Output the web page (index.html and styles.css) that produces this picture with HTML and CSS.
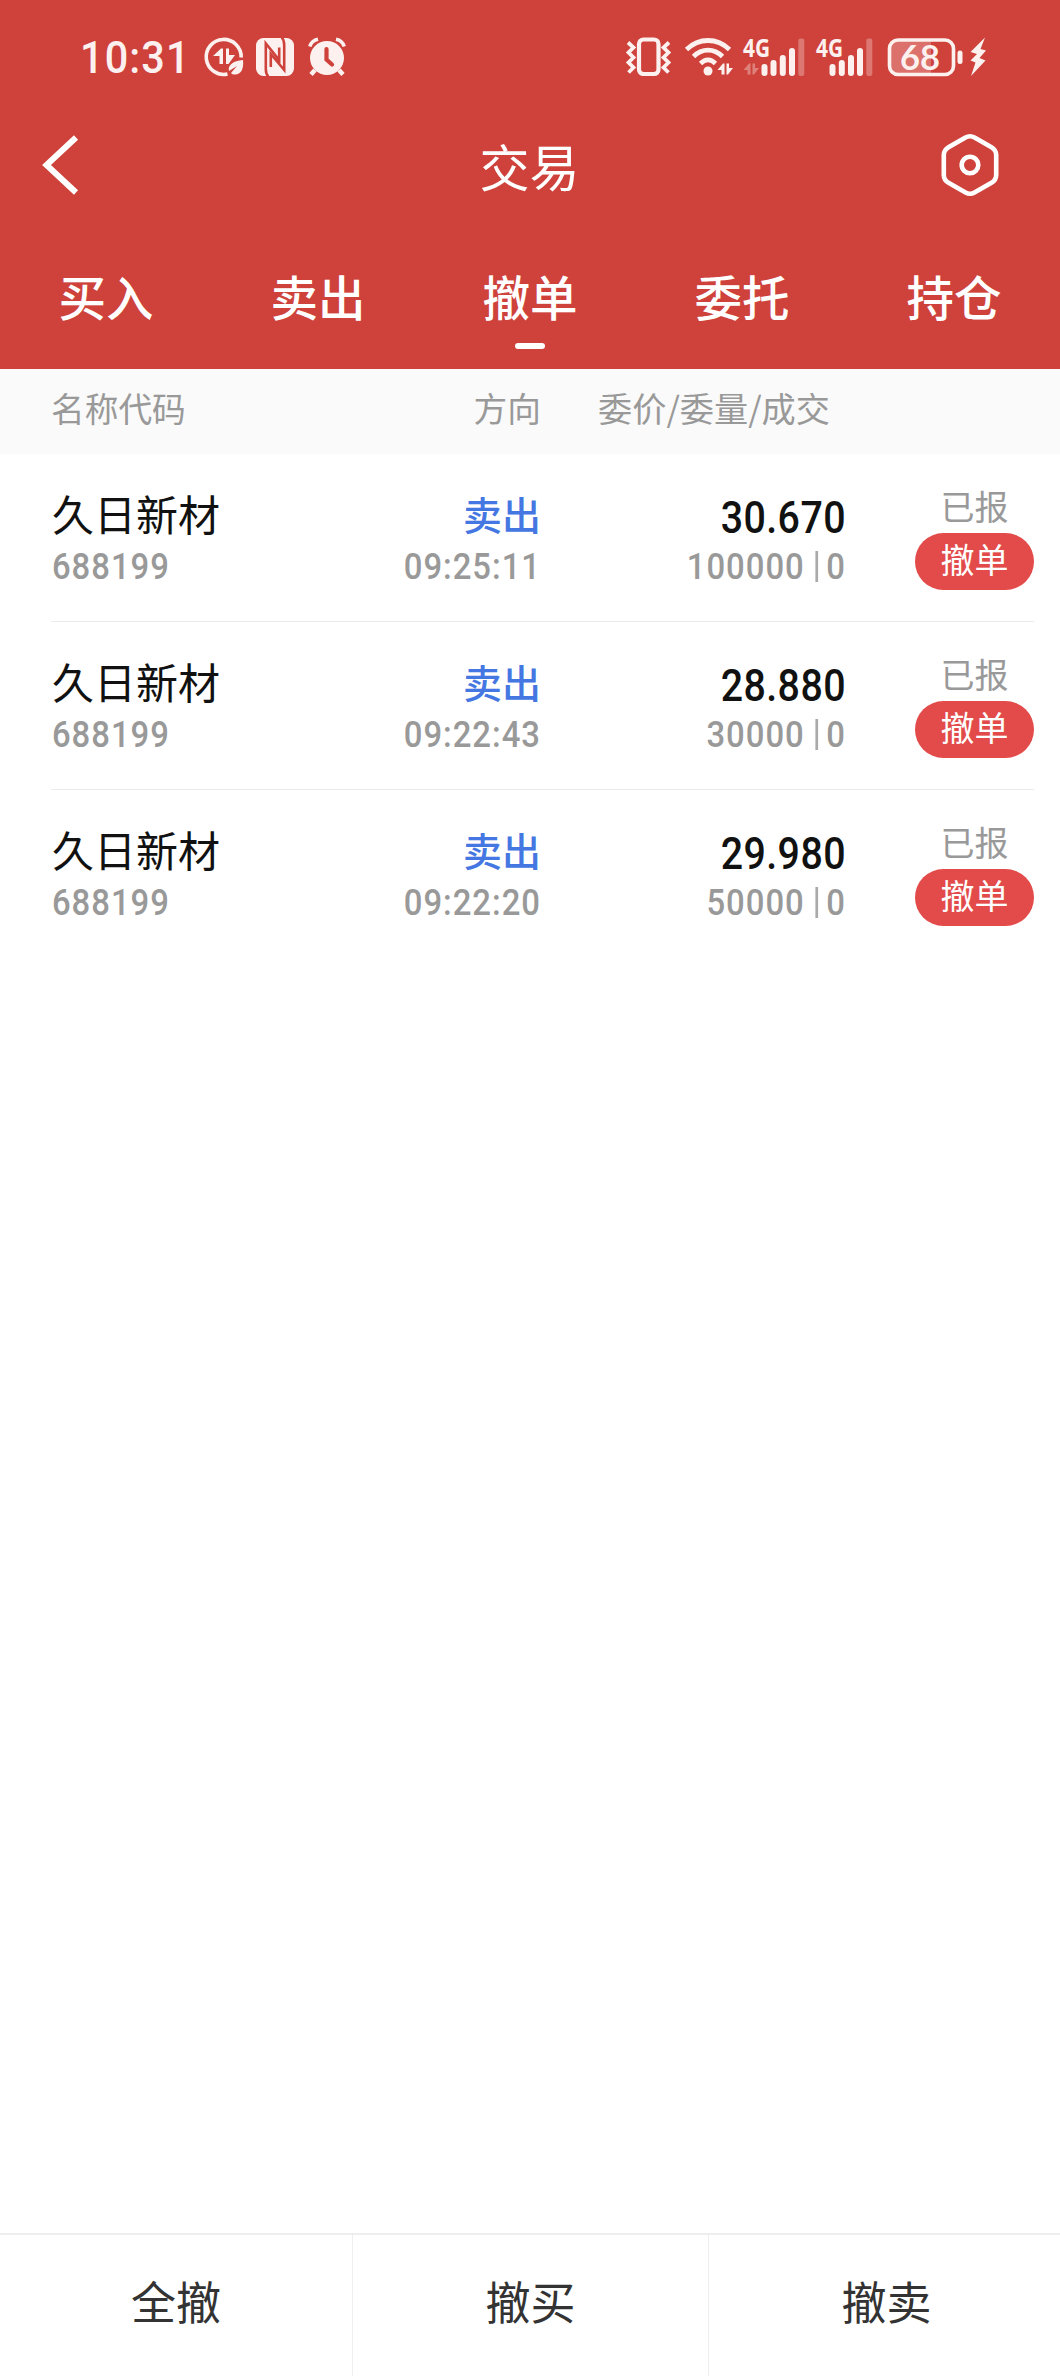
FILE: index.html
```html
<!DOCTYPE html>
<html lang="zh-CN">
<head>
  <meta charset="UTF-8">
  <meta name="viewport" content="width=device-width, initial-scale=1.0">
  <title>交易</title>
  <link rel="stylesheet" href="styles.css">
</head>
<body>
  <div class="app">
    <header class="top">
      <div class="status-bar">
        <div class="status-left">
          <span class="clock">10:31</span>
          <!-- data saver -->
          <svg class="icon" width="40" height="40" viewBox="0 0 40 40">
            <path d="M37.200 20.500A17.500 17.500 0 1 0 23.500 37" fill="none" stroke="#fdf1f0" stroke-width="3.600"/>
            <path d="M17 11.500h2V27h-3.500v-8H9z" fill="#fdf1f0"/>
            <path d="M22 11.500h3V18h6l-6.500 9H22z" fill="#fdf1f0"/>
            <path d="M39 23c1 9-2 14.500-8 14.500-2 0-3-.5-4-1.500l6-7-8 5c-1.500-6 4-10 14-11z" fill="#fdf1f0"/>
          </svg>
          <!-- NFC -->
          <svg class="icon nfc" width="38" height="40" viewBox="0 0 38 40">
            <rect x="0" y="1" width="38" height="38" rx="7.500" fill="#fdf1f0"/>
            <path d="M12.500 40Q9.800 37 9.800 32V6.500L23.200 23V10.500M14.800 30V17L28.200 33V8Q28.200 3 25.500 0" fill="none" stroke="#ce423b" stroke-width="2.600"/>
          </svg>
          <!-- alarm -->
          <svg class="icon alarm" width="38" height="40" viewBox="0 0 38 40">
            <circle cx="19" cy="21" r="17" fill="#fdf1f0"/>
            <path d="M1.800 9.500Q3.500 3.500 10 2.200M28 2.200Q34.500 3.500 36.200 9.500" fill="none" stroke="#fdf1f0" stroke-width="3.600"/>
            <path d="M7 33l-4 4.500M31 33l4 4.500" stroke="#fdf1f0" stroke-width="4.500"/>
            <path d="M18.500 12v10.500l5.500 5" fill="none" stroke="#ce423b" stroke-width="4.200" stroke-linecap="round"/>
          </svg>
        </div>
        <div class="status-right">
          <!-- vibrate -->
          <svg class="icon" width="46" height="40" viewBox="0 0 46 40">
            <rect x="13" y="2.500" width="19.500" height="34.500" rx="4.500" fill="none" stroke="#fdf1f0" stroke-width="4.200"/>
            <path d="M2 5.500l5.500 5-5 5 5 5-5 5 5 5-5 5M43 5.500l-5.500 5 5 5-5 5 5 5-5 5 5 5" fill="none" stroke="#fdf1f0" stroke-width="3.800"/>
          </svg>
          <!-- wifi -->
          <svg class="icon wifi" width="48" height="40" viewBox="0 0 48 40">
            <path d="M1.500 12.500C14 .5 32 .5 44.500 12.500" fill="none" stroke="#fdf1f0" stroke-width="4.800"/>
            <path d="M8.500 19.500C17 11 29 11 37.500 19.500" fill="none" stroke="#fdf1f0" stroke-width="4.800"/>
            <path d="M15.500 26.500Q23 19 30.500 26.500" fill="none" stroke="#fdf1f0" stroke-width="4.600"/>
            <circle cx="23" cy="34" r="4.500" fill="#fdf1f0"/>
            <path d="M38 26.500h1.500v11h-3V33H32.500zM41.500 26.500h2.500V31h4l-5 6.500h-1.500z" fill="#fdf1f0"/>
          </svg>
          <!-- SIM 1 -->
          <svg class="icon sim1" width="63" height="40" viewBox="0 0 63 40">
            <text class="net" x="0" y="19.500" textLength="27" lengthAdjust="spacingAndGlyphs">4G</text>
            <path d="M6 26.500h1.500v11h-3V33H.5zM9.500 26.500H12V31h4l-5 6.500H9.500z" fill="#df817b"/>
            <path d="M21.500 30v6M30.500 26v10M39.800 21v15M49 14v22" stroke="#fdf1f0" stroke-width="6" stroke-linecap="round"/>
            <rect x="55.300" y="1.500" width="6" height="37.500" rx="2" fill="#dd7771"/>
          </svg>
          <!-- SIM 2 -->
          <svg class="icon sim2" width="58" height="40" viewBox="0 0 58 40">
            <text class="net" x="0" y="19.500" textLength="27" lengthAdjust="spacingAndGlyphs">4G</text>
            <path d="M16.500 30v6M25.800 26v10M35 21v15M44 14v22" stroke="#fdf1f0" stroke-width="6" stroke-linecap="round"/>
            <rect x="50.300" y="1.500" width="6" height="37.500" rx="2" fill="#dd7771"/>
          </svg>
          <!-- battery -->
          <svg class="icon battery" width="100" height="40" viewBox="0 0 100 40">
            <path d="M10 3h34v34H10a7 7 0 0 1-7-7V10a7 7 0 0 1 7-7z" fill="#dc716b"/>
            <rect x="2.500" y="3" width="64" height="34.500" rx="8.500" fill="none" stroke="#fdf1f0" stroke-width="3.600"/>
            <rect x="70.500" y="13.500" width="5" height="13.500" rx="2.500" fill="#fdf1f0"/>
            <text class="level" x="13" y="33" textLength="40" lengthAdjust="spacing">68</text>
            <path d="M98 .5L83.500 15l6.500 2-6.500 6.500 5 2-4.500 13.500L98.500 23.500l-6-2.500 6.500-7.500-5.500-1.500z" fill="#fdf1f0"/>
          </svg>
        </div>
      </div>

      <div class="nav-bar">
        <svg class="icon" width="36" height="64" viewBox="0 0 36 64">
          <path d="M34 4.500L4.500 32 34 59.500" fill="none" stroke="#fff" stroke-width="6"/>
        </svg>
        <h1 class="title">交易</h1>
        <svg class="icon" width="60" height="64" viewBox="0 0 60 64">
          <path d="M25.500 4.500Q30 2 34.500 4.500L51.500 14.200Q56.200 17 56.200 22V42Q56.200 47 51.500 49.800L34.500 59.500Q30 62 25.500 59.500L8.500 49.800Q3.800 47 3.800 42V22Q3.800 17 8.500 14.200z" fill="none" stroke="#fff" stroke-width="4.600"/>
          <circle cx="30" cy="32" r="8.300" fill="none" stroke="#fff" stroke-width="4.600"/>
        </svg>
      </div>

      <nav class="tabs">
        <div class="tab">买入</div>
        <div class="tab">卖出</div>
        <div class="tab active">撤单</div>
        <div class="tab">委托</div>
        <div class="tab">持仓</div>
      </nav>
    </header>

    <div class="list-head">
      <div class="col-name">名称代码</div>
      <div class="col-side">方向</div>
      <div class="col-head-price">委价/委量/成交</div>
    </div>

    <main class="list">
      <div class="order">
        <div class="col-name">
          <div class="name">久日新材</div>
          <div class="sub">688199</div>
        </div>
        <div class="col-side">
          <div class="side">卖出</div>
          <div class="sub">09:25:11</div>
        </div>
        <div class="col-price">
          <div class="price">30.670</div>
          <div class="sub">100000<i class="bar"></i>0</div>
        </div>
        <div class="col-action">
          <div class="state">已报</div>
          <button class="cancel">撤单</button>
        </div>
      </div>

      <div class="order">
        <div class="col-name">
          <div class="name">久日新材</div>
          <div class="sub">688199</div>
        </div>
        <div class="col-side">
          <div class="side">卖出</div>
          <div class="sub">09:22:43</div>
        </div>
        <div class="col-price">
          <div class="price">28.880</div>
          <div class="sub">30000<i class="bar"></i>0</div>
        </div>
        <div class="col-action">
          <div class="state">已报</div>
          <button class="cancel">撤单</button>
        </div>
      </div>

      <div class="order">
        <div class="col-name">
          <div class="name">久日新材</div>
          <div class="sub">688199</div>
        </div>
        <div class="col-side">
          <div class="side">卖出</div>
          <div class="sub">09:22:20</div>
        </div>
        <div class="col-price">
          <div class="price">29.980</div>
          <div class="sub">50000<i class="bar"></i>0</div>
        </div>
        <div class="col-action">
          <div class="state">已报</div>
          <button class="cancel">撤单</button>
        </div>
      </div>
    </main>

    <footer class="bottom">
      <div class="bottom-item">全撤</div>
      <div class="bottom-item">撤买</div>
      <div class="bottom-item">撤卖</div>
    </footer>
  </div>
</body>
</html>
```

FILE: styles.css
```css
* {
  box-sizing: border-box;
}

body {
  margin: 0;
  font-family: "Noto Sans CJK SC", sans-serif;
  background: #fff;
}

.app {
  display: flex;
  flex-direction: column;
  width: 1060px;
  height: 2376px;
  overflow: hidden;
}

.icon {
  display: block;
  flex: none;
  overflow: visible;
}

/* Header */
.top {
  height: 369px;
  background: #ce423b;
  color: #fff;
}

.status-bar {
  display: flex;
  justify-content: space-between;
  height: 115px;
  padding: 37px 73px 0 80px;
}

.status-left,
.status-right {
  display: flex;
  align-items: flex-start;
}

.clock {
  width: 124px;
  font-family: Roboto, sans-serif;
  font-size: 45px;
  font-weight: 500;
  line-height: 42px;
  letter-spacing: 1.2px;
  color: #fdf1f0;
  transform: scaleX(0.92);
  transform-origin: left;
}

.nfc {
  margin-left: 12px;
}

.alarm {
  margin-left: 14px;
}

.wifi {
  margin-left: 13px;
}

.sim1 {
  margin-left: 10px;
}

.sim2 {
  margin-left: 10px;
}

.battery {
  margin-left: 13px;
}

.net {
  font-family: "Open Sans", sans-serif;
  font-size: 25px;
  font-weight: 700;
  fill: #fdf1f0;
}

.level {
  font-family: Lato, sans-serif;
  font-size: 34.500px;
  font-weight: 700;
  fill: #fdf1f0;
}

.nav-bar {
  display: flex;
  align-items: center;
  justify-content: space-between;
  height: 100px;
  padding: 0 60px 0 42px;
}

.title {
  margin: 0 0 0 41px;
  font-size: 50px;
  font-weight: 400;
  line-height: 92px;
}

.tabs {
  display: flex;
  height: 154px;
}

.tab {
  display: flex;
  flex: 1;
  flex-direction: column;
  align-items: center;
  padding-top: 46px;
  font-size: 47.500px;
  font-weight: 500;
  line-height: 70px;
}

.tab.active::after {
  content: "";
  width: 30px;
  height: 6px;
  margin-top: 12px;
  border-radius: 3px;
  background: #fff;
}

/* Order list */
.list-head {
  display: flex;
  height: 85px;
  padding-left: 51px;
  font-size: 33.700px;
  line-height: 77px;
  color: #999;
  background: #fafafa;
}

.col-name {
  width: 249px;
}

.col-side {
  width: 241px;
  text-align: right;
}

.col-head-price {
  padding-left: 57px;
  font-size: 34.200px;
}

.order {
  display: flex;
  height: 168px;
  margin: 0 26px 0 51px;
  padding-top: 35px;
  border-bottom: 1px solid #ececec;
}

.order:last-child {
  border-bottom: none;
}

.name {
  height: 58px;
  padding-left: 1px;
  font-size: 42px;
  line-height: 48px;
  color: #111;
}

.side {
  height: 58px;
  font-size: 39px;
  font-weight: 500;
  line-height: 49px;
  color: #4577e3;
}

/* narrow digits */
.sub,
.price {
  font-family: Roboto, sans-serif;
  font-weight: 500;
  transform: scaleX(0.9);
  transform-origin: right;
}

.sub {
  font-size: 36.500px;
  line-height: 40px;
  letter-spacing: 1.1px;
  color: #999;
}

.col-name .sub {
  padding-left: 1px;
  transform-origin: left;
}

.col-price {
  width: 305px;
  text-align: right;
}

.price {
  height: 58px;
  font-size: 43.700px;
  line-height: 59px;
  letter-spacing: 0.5px;
  color: #111;
}

.bar {
  display: inline-block;
  width: 3px;
  height: 31px;
  margin: 0 9px 0 12px;
  vertical-align: -3px;
  background: #aaa;
}

.col-action {
  width: 119px;
  margin-left: auto;
  text-align: center;
}

.state {
  height: 44px;
  font-size: 34px;
  line-height: 34px;
  color: #999;
}

.cancel {
  display: block;
  width: 119px;
  height: 57px;
  padding: 0 0 6px;
  border: none;
  border-radius: 29px;
  font-family: inherit;
  font-size: 34px;
  line-height: 51px;
  color: #fff;
  background: #e24b4a;
}

/* Bottom actions */
.bottom {
  display: flex;
  height: 143px;
  margin-top: auto;
  border-top: 2px solid #eee;
}

.bottom-item {
  flex: none;
  width: 352px;
  font-size: 45px;
  line-height: 131px;
  text-align: center;
  color: #333;
}

.bottom-item + .bottom-item {
  width: 356px;
  border-left: 1px solid #eee;
}
```
